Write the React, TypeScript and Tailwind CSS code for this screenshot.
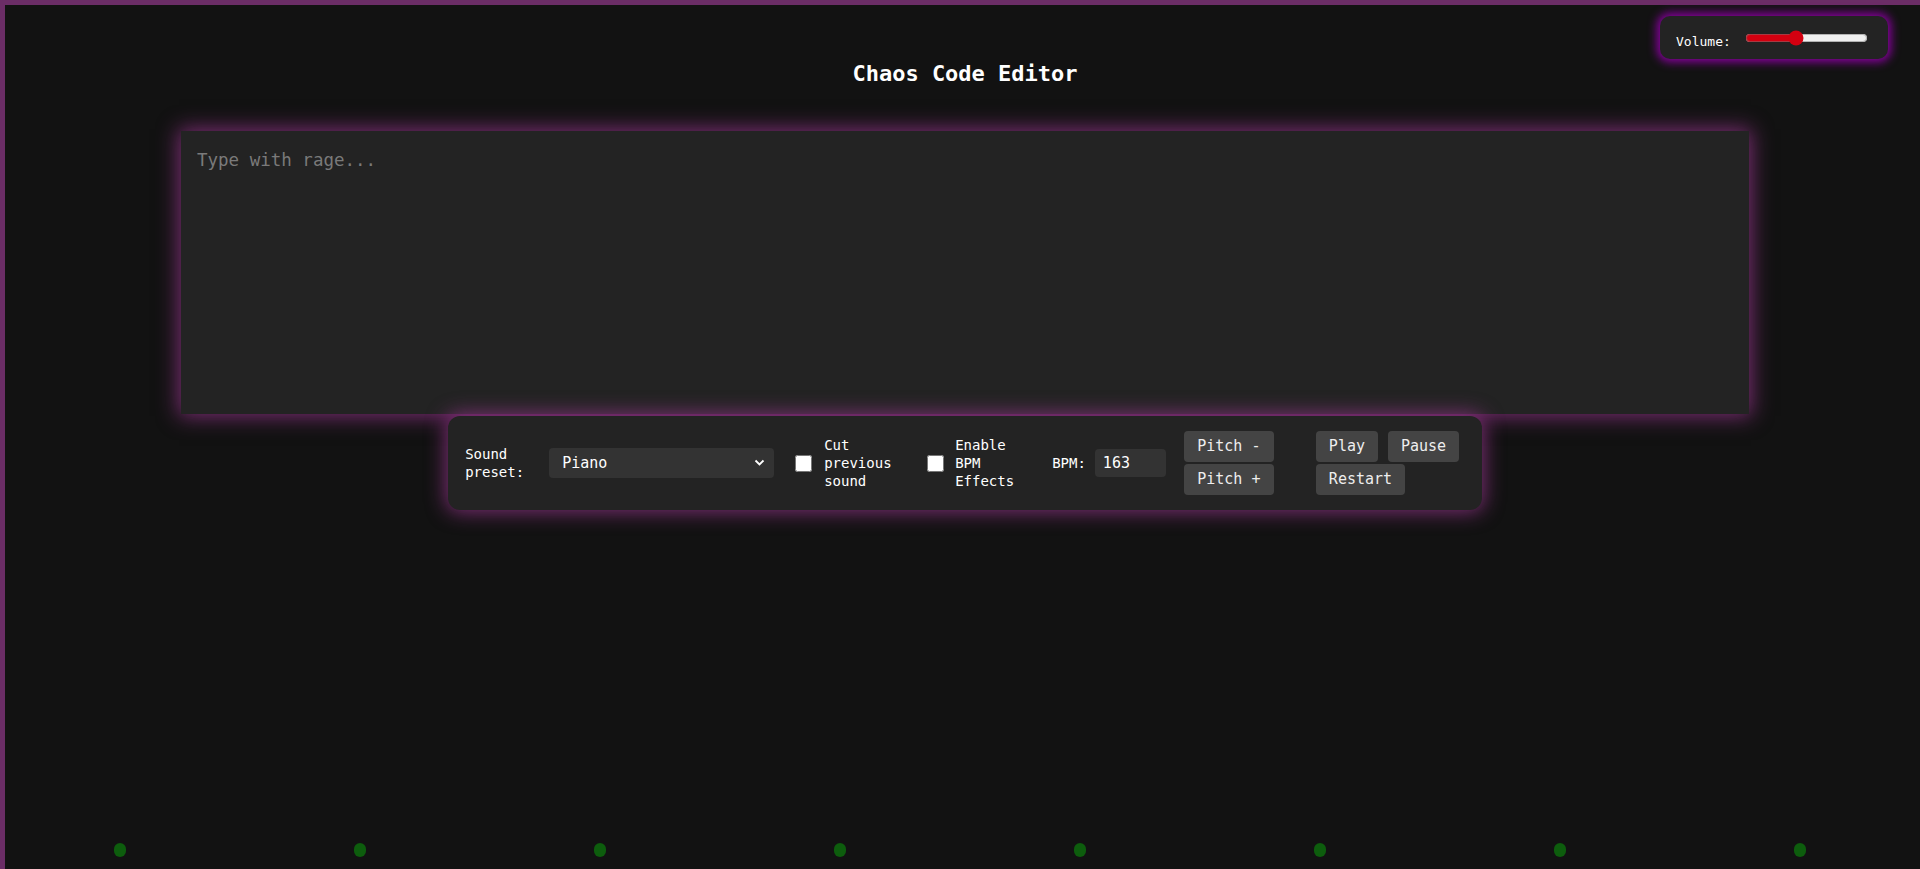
import React, { useState } from "react";

const mono = "font-['DejaVu_Sans_Mono',_'Liberation_Mono',_monospace]";

// panel button
const Btn = ({ children, w }: { children: string; w?: string }) => (
    <button className={`h-[31px] px-[13px] rounded-[4px] bg-[#444] text-[#eee] text-[15px] leading-[19px] ${w ?? ""}`}>
        {children}
    </button>
);

export default function App() {
    const [volume, setVolume] = useState(40);
    const [bpm, setBpm] = useState("163");
    const [text, setText] = useState("");

    return (
        <div className={`relative w-screen h-[869px] overflow-hidden bg-[#121212] text-white ${mono}`}>
            <div className="w-[1925px] h-full border-t-[5px] border-l-[5px] border-[#6b2d66]">
                <div className="flex flex-col items-center pt-[56px]">
                    <h1 className="text-[22px] leading-[26px] font-bold text-white">Chaos Code Editor</h1>

                    {/* editor */}
                    <textarea
                        value={text}
                        onChange={(e) => setText(e.target.value)}
                        placeholder="Type with rage..."
                        className="mt-[44px] w-[1568px] h-[283px] resize-none bg-[#232323] text-[#ddd] text-[17.5px] leading-[24px] pl-[16px] pt-[17px] outline-none placeholder:text-[#7a7a7a] shadow-[0_0_20px_2px_rgba(160,55,150,0.75)]"
                    />

                    {/* controls */}
                    <div className="mt-[2px] flex items-center h-[94px] pl-[17px] pr-[22px] rounded-[12px] bg-[#232323] shadow-[0_0_20px_2px_rgba(160,55,150,0.75)] text-[14px] leading-[18px]">
                        <label className="w-[60px]">Sound preset:</label>
                        <div className="relative ml-[24px] w-[225px] h-[30px]">
                            <select className="appearance-none w-full h-full rounded-[4px] bg-[#333] text-white text-[15px] pl-[13px] outline-none">
                                <option>Piano</option>
                                <option>Synth</option>
                                <option>Drums</option>
                            </select>
                            <svg className="absolute right-[9px] top-[10px] pointer-events-none" width="11" height="9" viewBox="0 0 11 9" fill="none">
                                <path d="M1.5 2.5 L5.5 6.5 L9.5 2.5" stroke="white" strokeWidth="1.8" />
                            </svg>
                        </div>
                        <input type="checkbox" className="ml-[21px] w-[17px] h-[17px]" />
                        <span className="ml-[12px] w-[70px]">Cut previous sound</span>
                        <input type="checkbox" className="ml-[33px] w-[17px] h-[17px]" />
                        <span className="ml-[11px] w-[62px]">Enable BPM Effects</span>
                        <span className="ml-[35px]">BPM:</span>
                        <input
                            value={bpm}
                            onChange={(e) => setBpm(e.target.value)}
                            className="ml-[9px] w-[71px] h-[28px] rounded-[4px] bg-[#333] text-white text-[15px] pl-[8px] outline-none"
                        />
                        <div className="ml-[18px] flex flex-col gap-[2px]">
                            <Btn w="w-[90px]">Pitch -</Btn>
                            <Btn w="w-[90px]">Pitch +</Btn>
                        </div>
                        <div className="ml-[42px] w-[144px] flex flex-wrap gap-x-[10px] gap-y-[2px]">
                            <Btn>Play</Btn>
                            <Btn>Pause</Btn>
                            <Btn>Restart</Btn>
                        </div>
                    </div>
                </div>
            </div>

            {/* volume */}
            <div className="absolute top-[16px] right-[32px] w-[228px] h-[43px] flex items-center pl-[16px] rounded-[10px] bg-[#232323] shadow-[0_0_10px_3px_#8a00a0]">
                <span className="text-[13px] mt-[8px]">Volume:</span>
                <input
                    type="range"
                    min={0}
                    max={100}
                    value={volume}
                    onChange={(e) => setVolume(Number(e.target.value))}
                    className="ml-[14px] w-[123px] accent-[#d40010]"
                />
            </div>

            {/* dots */}
            <div className="absolute inset-x-0 bottom-[12px] flex justify-around">
                {Array.from({ length: 8 }).map((_, i) => (
                    <span key={i} className="w-[12px] h-[14px] rounded-full bg-[#0d5d0d]" />
                ))}
            </div>
        </div>
    );
}
